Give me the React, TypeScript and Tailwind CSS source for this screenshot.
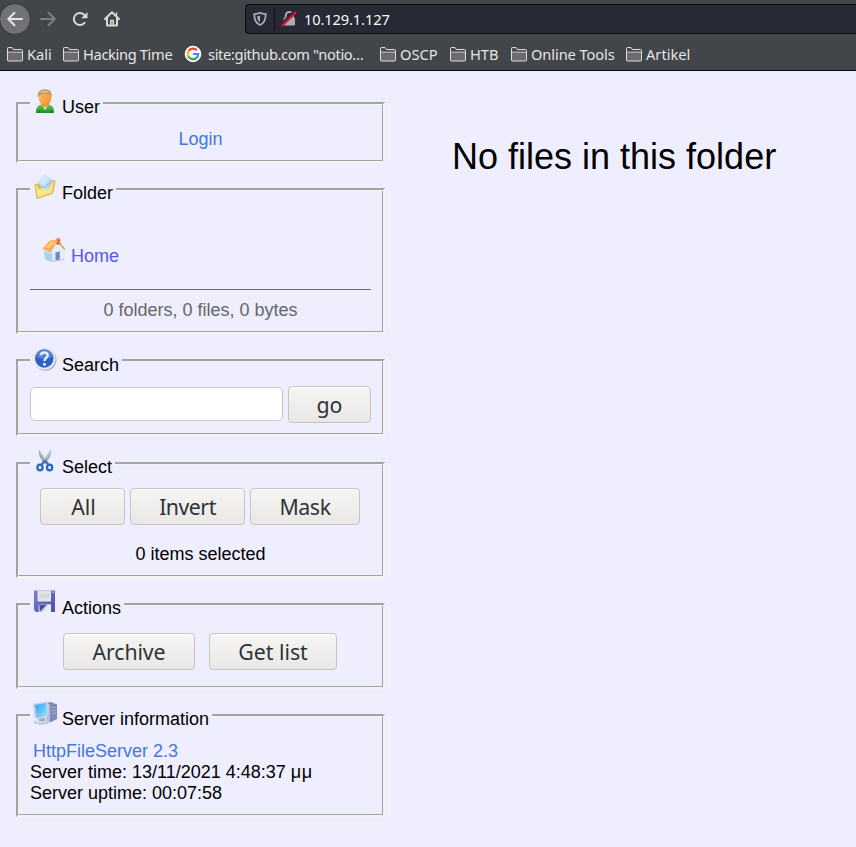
import type { ReactNode } from "react";

const UI_FONT = "font-['Noto_Sans','Open_Sans',sans-serif]";

function UserIcon() {
  return (
    <svg width="24" height="24" viewBox="0 0 24 24">
      <defs>
        <linearGradient id="shirt" x1="0" x2="0" y1="0" y2="1">
          <stop offset="0" stopColor="#6cc95c" />
          <stop offset="1" stopColor="#1c8f28" />
        </linearGradient>
        <linearGradient id="face" x1="0" x2="1" y1="0" y2="1">
          <stop offset="0" stopColor="#ffc56e" />
          <stop offset="1" stopColor="#f08a24" />
        </linearGradient>
      </defs>
      <path d="M3 24C2.500 18.500 5 16 9 15.500L15 15.500C19 16 21.500 18.500 21 24Z" fill="url(#shirt)" />
      <path d="M8.500 15.500L15.500 15.500L12.200 21Z" fill="#f3ffe6" />
      <path d="M6.500 21V24M18 21V24" stroke="#137622" strokeWidth="1" />
      <path d="M8 12H16V16L12.200 19L8 16Z" fill="#f39a38" />
      <ellipse cx="12" cy="9" rx="6.300" ry="7.600" fill="url(#face)" />
      <path d="M5 9C3.500 3 7.500 0 12 0.200C17 0 20 4 18.500 9L17.500 6L12 4.500L6.200 6.500Z" fill="#c09a60" />
      <path d="M7 3C9 0.800 14 0.800 16.500 3.500L8 4Z" fill="#dcbf88" />
    </svg>
  );
}

function FolderIcon() {
  return (
    <svg width="24" height="24" viewBox="0 0 24 24">
      <path d="M2.500 10L5 8.500L8 9.500L19 5L22 8L20 17L4 23.500Z" fill="#d9af35" />
      <path d="M5 7L12 0L20.500 5.500L19 15L8 15Z" fill="#a9d5f6" />
      <path d="M12 0L17 4L11 11L5 7Z" fill="#cfe9ff" />
      <path d="M2 9.500L4.500 9L6 13L13 12L15 9L22 5.500L19.500 18.500L4 23.500Z" fill="#f8df79" stroke="#cda63a" strokeWidth="0.800" />
      <path d="M9 12L19 8.500L14.500 17Z" fill="#a8d8ed" />
      <path d="M4 16L18 12L17 16L5 21Z" fill="#fff0a4" opacity="0.500" />
    </svg>
  );
}

function HomeIcon() {
  return (
    <svg width="24" height="24" viewBox="0 0 24 24">
      <path d="M2 11L14 5L22.500 12V21L11 23.500L3 21Z" fill="#cfe6f6" />
      <path d="M10.500 12L17 4L22.500 12V21.500L10.500 23.500Z" fill="#e2effb" />
      <path d="M2 13.500L10.500 16V23.500L3 21Z" fill="#afd2ef" />
      <rect x="14.500" y="0.500" width="3.600" height="6" fill="#cf4b38" />
      <rect x="14.500" y="0.500" width="3.600" height="1.400" fill="#ef8774" />
      <path d="M0.300 10.500L8 2.500L16 1.500L8.500 14.500Z" fill="#ffad49" />
      <path d="M3 9.500L9 3.500L14 2.800L7 11Z" fill="#ffc878" />
      <path d="M15.500 2.500L22.800 11.500" stroke="#e39a5a" strokeWidth="1.300" />
      <path d="M13.500 14.500L17.800 13.500V21.500L13.500 22.500Z" fill="#7587b5" />
      <path d="M4 21.500L10.500 23.500L22 21.500" fill="none" stroke="#9fb8d8" strokeWidth="0.800" />
    </svg>
  );
}

function HelpIcon() {
  return (
    <svg width="24" height="24" viewBox="0 0 24 24">
      <circle cx="12.500" cy="12.800" r="11" fill="#a3aab5" />
      <circle cx="11.500" cy="11.700" r="11.200" fill="#e2e7ee" />
      <circle cx="11.300" cy="11.500" r="9.200" fill="#2d61c8" />
      <path d="M3.500 10C4 5 7 3 11.500 2.800C16 3 18.500 5 19.500 9C14 13 8 12 3.500 10Z" fill="#6594e4" opacity="0.700" />
      <path d="M7.800 8.300C8 4.500 15 4.500 14.700 8.500C14.500 11 11.500 11 11.500 14" fill="none" stroke="#e8f0fc" strokeWidth="2.400" />
      <circle cx="11.500" cy="17.300" r="1.500" fill="#e8f0fc" />
    </svg>
  );
}

function ScissorsIcon() {
  return (
    <svg width="24" height="24" viewBox="0 0 24 24">
      <path d="M5.500 0.500L8 4L14 13L11 15L6.500 7Z" fill="#8d9cab" />
      <path d="M18 0.500L15.500 4L9.500 13L12.500 15L17.500 7Z" fill="#a0adb9" />
      <path d="M6.500 3L11 11M17 3L14 9" stroke="#cdd6de" strokeWidth="0.800" />
      <ellipse cx="7" cy="18.500" rx="2.600" ry="2.800" fill="none" stroke="#2869c1" strokeWidth="2.300" />
      <ellipse cx="16.600" cy="18.500" rx="2.600" ry="2.800" fill="none" stroke="#2869c1" strokeWidth="2.300" />
      <path d="M8.500 16L11 12.500L13 12.500L15.500 16" fill="none" stroke="#3a6fb8" strokeWidth="2.200" />
      <circle cx="11.900" cy="12" r="1" fill="#50647d" />
    </svg>
  );
}

function DiskIcon() {
  return (
    <svg width="24" height="24" viewBox="0 0 24 24">
      <defs>
        <linearGradient id="disk" x1="0" x2="1" y1="0" y2="1">
          <stop offset="0" stopColor="#7e7fd2" />
          <stop offset="1" stopColor="#4c4cab" />
        </linearGradient>
      </defs>
      <path d="M1 0.500H22V22H3L1 20Z" fill="url(#disk)" />
      <rect x="4.500" y="0.500" width="13.500" height="11" fill="#e4e4e6" />
      <path d="M6.500 5H16M6.500 7H16" stroke="#cacace" strokeWidth="1" />
      <rect x="5.500" y="14.500" width="12.500" height="7.500" fill="#bfc6dc" />
      <path d="M6.500 15H13.500L7 21.500Z" fill="#4a4aa6" />
      <path d="M14.500 14.500H18V22H9.500Z" fill="#e9edf0" />
      <rect x="19.500" y="1.500" width="1.500" height="1.500" fill="#bdbdf0" />
    </svg>
  );
}

function ServerIcon() {
  return (
    <svg width="24" height="24" viewBox="0 0 24 24">
      <defs>
        <linearGradient id="screen" x1="0" x2="1" y1="0" y2="1">
          <stop offset="0" stopColor="#2f9fee" />
          <stop offset="1" stopColor="#91e7ff" />
        </linearGradient>
      </defs>
      <path d="M13 2L18 1L24 3.500V18L17 21.500L13 18Z" fill="#8088b4" />
      <path d="M13 2L17 3.500V21.500L13 18Z" fill="#b5bcd8" />
      <path d="M18.500 7L23 6M18.500 10L23 9M18.500 13L23 12" stroke="#a9b1d4" strokeWidth="1" />
      <ellipse cx="8.500" cy="21" rx="7.500" ry="2.500" fill="#b9c0d3" />
      <ellipse cx="8" cy="20.300" rx="6" ry="1.600" fill="#e4e8f1" />
      <path d="M6 17H12V20.500H6Z" fill="#a3adca" />
      <path d="M0 3L13.500 0.500L15.500 3V15.500L4 18.500L1.500 16Z" fill="#c3cee2" />
      <path d="M2 4L13 2.200L13.600 14L4 16.500Z" fill="url(#screen)" />
    </svg>
  );
}

interface PanelProps {
  title: string;
  icon: ReactNode;
  frame: string;
  legend?: string;
  children: ReactNode;
}

function Panel({ title, icon, frame, legend = "-mt-4 mb-0", children }: PanelProps) {
  return (
    <section className={`box-border w-[369px] shrink-0 border-2 border-t-[#a5a3a0] border-r-[#f6f4f3] border-b-[#f6f4f3] border-l-[#a5a3a0] ${frame}`}>
      <div className="h-full border border-t-[#f6f4f3] border-r-[#a5a3a0] border-b-[#a5a3a0] border-l-[#f6f4f3] px-[11px]">
        <h2 className={`flex h-6 w-fit items-start bg-[#eeeeff] pr-[3px] pl-[3px] ${legend}`}>
          {icon}
          <span className="mt-2 ml-[5px] leading-5 whitespace-nowrap">{title}</span>
        </h2>
        {children}
      </div>
    </section>
  );
}

function Button({ label, size }: { label: string; size: string }) {
  return (
    <button
      className={`flex h-[37px] shrink-0 items-center justify-center rounded-[4px] border border-[#c9c4be] bg-linear-to-b from-[#f6f5f4] to-[#e9e8e6] text-[21.300px] leading-[30px] whitespace-nowrap text-[#2e3436] shadow-[inset_0_1px_0_#fff] ${UI_FONT} ${size}`}
    >
      {label}
    </button>
  );
}

function Bookmark({ label, size }: { label: string; size: string }) {
  return (
    <div className={`flex shrink-0 items-center ${size}`}>
      <svg width="16" height="15" viewBox="0 0 16 15" className="shrink-0">
        <path d="M.5 13.500V1.500Q.5.500 1.500.500H5L6.500 2.500H14.500Q15.500 2.500 15.500 3.500V13Q15.500 14 14.500 14H1.500Q.5 14 .5 13.500Z" fill="#6b6b70" stroke="#deded9" />
        <path d="M1 5H15" stroke="#deded9" />
        <path d="M1.200 1.200H4.600L6.200 3.200H15V4.500H1Z" fill="#45484d" />
      </svg>
      <span className="ml-1 whitespace-nowrap">{label}</span>
    </div>
  );
}

function BrowserBar() {
  return (
    <header className={`flex h-[71px] flex-col border-b border-[#0c0c0d] bg-[#42454a] text-[#e6e6e3] ${UI_FONT}`}>
      <div className="flex h-[39px] items-start">
        <div className="-ml-px mt-[3px] flex size-8 items-center justify-center rounded-full border border-[#333539] bg-[#717275]">
          <svg width="16" height="16" viewBox="0 0 16 16" fill="none" stroke="#e4e4e0" strokeWidth="2" strokeLinecap="round" strokeLinejoin="round">
            <path d="M15 8H1.500M7.500 1.800L1.300 8L7.500 14.200" />
          </svg>
        </div>
        <svg width="16" height="16" viewBox="0 0 16 16" className="mt-[11px] ml-[9px]" fill="none" stroke="#7d7f82" strokeWidth="2" strokeLinecap="round" strokeLinejoin="round">
          <path d="M1 8H14.500M8.500 1.800L14.700 8L8.500 14.200" />
        </svg>
        <svg width="16" height="16" viewBox="0 0 16 16" className="mt-[11px] ml-4" fill="none" stroke="#d9d9d5" strokeWidth="2" strokeLinecap="round">
          <path d="M12.500 11.800A6 6 0 1 1 12.500 4.200" />
          <path d="M15.500 1V7.200H9.200Z" fill="#d9d9d5" stroke="none" />
        </svg>
        <svg width="16" height="16" viewBox="0 0 16 16" className="mt-[11px] ml-4" fill="none" stroke="#d9d9d5" strokeWidth="2" strokeLinecap="round" strokeLinejoin="round">
          <path d="M1 8L8 1.300L15 8M3 7.500V14.500H13V7.500" />
          <path d="M6.800 14V9.500H9.200V14" strokeWidth="1.600" />
          <path d="M12.500 2V4" strokeWidth="1.500" />
        </svg>
        <div className="mt-1 ml-[125px] flex h-[30px] flex-1 items-center rounded-l-[4px] border border-r-0 border-[#0e0f13] bg-[#272935]">
          <svg width="14" height="16" viewBox="0 0 14 16" className="ml-[7px]" fill="none" stroke="#aaaab0" strokeWidth="1.800">
            <path d="M7 1.700C9 2.600 11 2.900 12.700 3.100C12.800 8 11.500 12 7 14C2.500 12 1.200 8 1.300 3.100C3 2.900 5 2.600 7 1.700Z" />
            <path d="M7 4.500V11.500C5 10 4.300 8 4.200 5.200Z" fill="#aaaab0" stroke="none" />
          </svg>
          <span className="ml-[7px] h-[22px] w-px bg-[#0e0f13]" />
          <svg width="16" height="16" viewBox="0 0 16 16" className="ml-[6px]">
            <path d="M4.800 7V4.500A3.500 3.500 0 0 1 11.800 4.500V7" fill="none" stroke="#aaaab0" strokeWidth="2" />
            <rect x="2.500" y="6.500" width="11.500" height="8" rx="1" fill="#aaaab0" />
            <path d="M1 13.500L13.500 1" stroke="#272935" strokeWidth="3.800" />
            <path d="M1.500 14.500L14.500 1.500" stroke="#e7123d" strokeWidth="2" strokeLinecap="round" />
          </svg>
          <span className="ml-[7px] text-[14.670px] leading-5 tracking-[-0.13px] text-[#f9f9fa]">10.129.1.127</span>
        </div>
      </div>
      <nav className="flex h-8 items-center pl-[7px] text-[14.670px] leading-5">
        <Bookmark label="Kali" size="w-14" />
        <Bookmark label="Hacking Time" size="w-[121px] tracking-[-0.35px]" />
        <div className="flex w-[196px] shrink-0 items-center">
          <svg width="18" height="18" viewBox="0 0 18 18" className="shrink-0">
            <circle cx="9" cy="9" r="8.300" fill="#fff" />
            <path d="M4.700 6A5.200 5.200 0 0 1 12.800 5.200" fill="none" stroke="#ea4335" strokeWidth="2.200" />
            <path d="M4.500 11.600A5.200 5.200 0 0 1 4.700 5.900" fill="none" stroke="#fbbc05" strokeWidth="2.200" />
            <path d="M12.500 12.900A5.200 5.200 0 0 1 4.400 11.500" fill="none" stroke="#34a853" strokeWidth="2.200" />
            <path d="M9 9H14.200A5.200 5.200 0 0 1 12.400 13" fill="none" stroke="#4285f4" strokeWidth="2.200" />
          </svg>
          <span className="ml-[6px] tracking-[-0.36px] whitespace-nowrap">site:github.com "notio…</span>
        </div>
        <Bookmark label="OSCP" size="w-[70px]" />
        <Bookmark label="HTB" size="w-[61px]" />
        <Bookmark label="Online Tools" size="w-[115px] tracking-[-0.1px]" />
        <Bookmark label="Artikel" size="w-[90px]" />
      </nav>
    </header>
  );
}

export default function App() {
  return (
    <div className="flex h-[847px] w-[856px] flex-col overflow-hidden bg-[#eeeeff] font-['Liberation_Sans',Arial,sans-serif] text-[18px] text-black">
      <BrowserBar />
      <main className="flex flex-1 items-start">
        <div className="mt-[31px] ml-4 flex w-[369px] flex-col">
          <Panel title="User" icon={<UserIcon />} frame="h-[61px]">
            <a className="mt-4 block text-center leading-[21px] text-[#4477dd]">Login</a>
          </Panel>
          <Panel title="Folder" icon={<FolderIcon />} frame="mt-[25px] h-[146px]">
            <a className="mt-[39px] ml-3 flex h-6 items-start text-[#5555ff]">
              <HomeIcon />
              <span className="mt-2 ml-[5px] leading-5">Home</span>
            </a>
            <hr className="mt-[27px] border-t border-[#666666]" />
            <p className="mt-[10px] text-center leading-[21px] text-[#666666]">0 folders, 0 files, 0 bytes</p>
          </Panel>
          <Panel title="Search" icon={<HelpIcon />} frame="mt-[25px] h-[77px]" legend="-mt-[15px] -mb-px">
            <div className="mt-4 flex items-start gap-[5px]">
              <input className="mt-px h-[34px] w-[253px] rounded-[5px] border border-[#cdc7c2] bg-white px-2" />
              <Button label="go" size="w-[83px]" />
            </div>
          </Panel>
          <Panel title="Select" icon={<ScissorsIcon />} frame="mt-[26px] h-[116px]">
            <div className="mt-[15px] flex gap-[5px] pl-[10px]">
              <Button label="All" size="w-[85px] pl-[2px]" />
              <Button label="Invert" size="w-[115px] tracking-[-0.5px]" />
              <Button label="Mask" size="w-[110px] tracking-[-0.4px]" />
            </div>
            <p className="mt-[19px] text-center leading-[21px]">0 items selected</p>
          </Panel>
          <Panel title="Actions" icon={<DiskIcon />} frame="mt-[25px] h-[86px]">
            <div className="mt-[19px] flex gap-[14px] pl-[33px]">
              <Button label="Archive" size="w-[132px] tracking-[-0.1px]" />
              <Button label="Get list" size="w-[128px]" />
            </div>
          </Panel>
          <Panel title="Server information" icon={<ServerIcon />} frame="mt-[25px] h-[103px]">
            <div className="mt-4 leading-[21px] whitespace-nowrap">
              <a className="block pl-[3px] text-[#4477dd]">HttpFileServer 2.3</a>
              <p>Server time: 13/11/2021 4:48:37 <span className="tracking-[0.5px]">μμ</span></p>
              <p>Server uptime: 00:07:58</p>
            </div>
          </Panel>
        </div>
        <h1 className="mt-[65px] ml-[67px] text-[36px] leading-[41px] whitespace-nowrap">No files in this folder</h1>
      </main>
    </div>
  );
}
